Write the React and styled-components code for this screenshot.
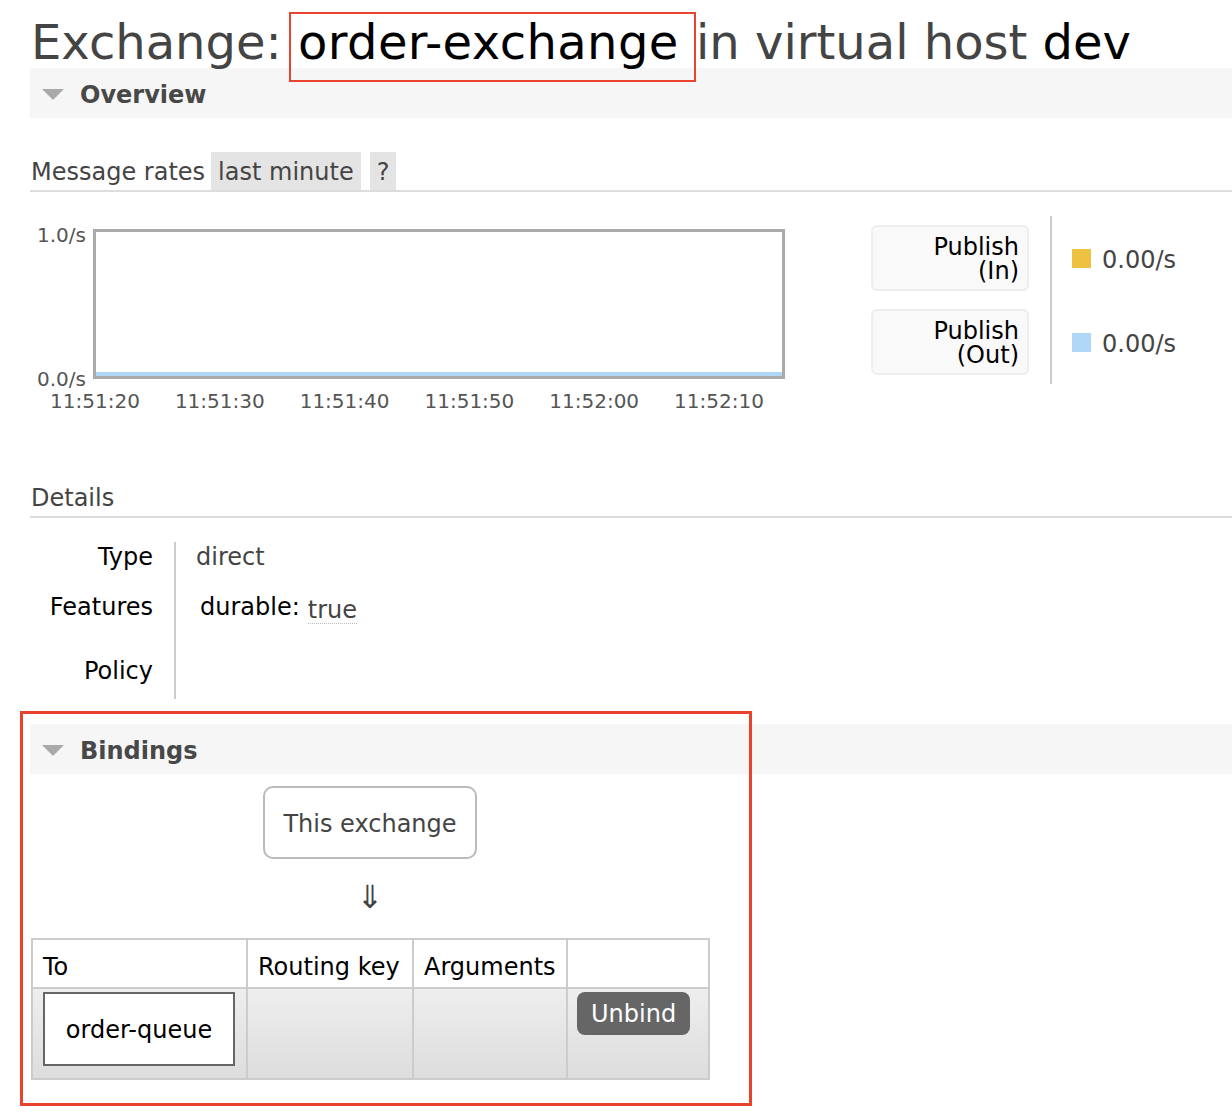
import React from 'react';
import styled, { createGlobalStyle } from 'styled-components';

// Page-wide reset: Verdana-like font, no body margin
const GlobalStyle = createGlobalStyle`
  body {
    margin: 0;
    background: #fff;
    font-family: "DejaVu Sans", Verdana, sans-serif;
    font-size: 24px;
    color: #444;
  }
`;

const Page = styled.div`
  padding: 0 0 30px 30px;
`;

const Title = styled.h1`
  margin: 16px 0 0 1px;
  font-size: 48px;
  line-height: 52px;
  font-weight: normal;
  color: #444;
  white-space: nowrap;
`;

const Strong = styled.span`
  color: #000;
`;

// annotation frame drawn over the exchange name
const Marked = styled.span`
  position: relative;
  color: #000;
  letter-spacing: 0.4px;
  margin-left: 1px;

  &::after {
    content: '';
    position: absolute;
    left: -9px;
    right: -17px;
    top: -2px;
    bottom: -12px;
    border: 2px solid #e8432e;
    pointer-events: none;
  }
`;

const Rest = styled.span`
  margin-left: 2px;
`;

const SectionBar = styled.div`
  display: flex;
  align-items: center;
  gap: 16px;
  height: 50px;
  padding: 3px 0 0 12px;
  box-sizing: border-box;
  background: #f6f6f6;
  font-weight: bold;
  color: #484848;
  margin-top: ${(p) => p.$top || 0}px;
`;

const Arrow = () => (
  <svg width="22" height="11" viewBox="0 0 22 11">
    <polygon points="0,0 22,0 11,11" fill="#aaa" />
  </svg>
);

const Heading = styled.div`
  display: flex;
  align-items: stretch;
  height: 36px;
  padding-top: 2px;
  line-height: 36px;
  border-bottom: 2px solid #ddd;
  margin-top: ${(p) => p.$top || 0}px;
`;

const HeadingText = styled.span`
  padding: 0 6px 0 1px;
`;

const HeadingTag = styled.span`
  padding: 2px 7px 0;
  margin: -2px 9px 0 0;
  background: #e4e4e4;
`;

const RatesRow = styled.div`
  display: flex;
  align-items: flex-start;
  margin-top: 24px;
`;

const Chart = styled.div`
  display: grid;
  grid-template-columns: 63px 692px;
  grid-template-rows: 150px auto;
  margin-top: 13px;
  font-size: 20px;
  line-height: 24px;
  color: #555;
`;

const YAxis = styled.div`
  display: flex;
  flex-direction: column;
  justify-content: space-between;
  align-items: flex-end;
  padding-right: 7px;
  margin: -6px 0 -12px;
`;

const Plot = styled.div`
  display: flex;
  flex-direction: column;
  justify-content: flex-end;
  border: 3px solid #aaa;
  background: #fff;
`;

const Series = styled.div`
  height: 4px;
  background: #afd8f8;
`;

const XAxis = styled.div`
  grid-column: 1 / 3;
  display: flex;
  padding-left: 2.6px;
  margin-top: 10px;
`;

const Tick = styled.span`
  width: 124.8px;
  text-align: center;
  flex: none;
`;

const Legend = styled.div`
  display: grid;
  grid-template-columns: auto auto;
  margin-left: 86px;
`;

const LegendLabelCell = styled.div`
  padding: 9px 21px 9px 0;
  border-right: 2px solid #ccc;
`;

const LegendLabel = styled.div`
  box-sizing: border-box;
  width: 158px;
  height: 66px;
  padding: 8px 8px 0 0;
  border: 2px solid #eee;
  border-radius: 6px;
  background: #f9f9f9;
  text-align: right;
  line-height: 24px;
  color: #000;
`;

const LegendValue = styled.div`
  display: flex;
  align-items: center;
  gap: 11px;
  padding: 3px 0 0 20px;
`;

const Swatch = styled.span`
  width: 19px;
  height: 19px;
  margin-top: -2px;
  background: ${(p) => p.$color};
`;

const DetailsGrid = styled.div`
  display: grid;
  grid-template-columns: 144px 1fr;
  margin-top: 24px;
  line-height: 24px;
`;

const DetailLabel = styled.div`
  height: ${(p) => p.$h}px;
  padding-top: ${(p) => p.$pad || 0}px;
  padding-right: 21px;
  box-sizing: border-box;
  text-align: right;
  color: #000;
`;

const DetailValue = styled.div`
  height: ${(p) => p.$h}px;
  padding-top: ${(p) => p.$pad || 0}px;
  padding-left: ${(p) => p.$left || 20}px;
  box-sizing: border-box;
  border-left: 2px solid #ccc;
  color: ${(p) => (p.$dark ? '#000' : '#444')};
`;

const Abbr = styled.span`
  display: inline-block;
  margin-left: 8px;
  line-height: 26px;
  vertical-align: -3px;
  color: #444;
  border-bottom: 1px dotted #bbb;
`;

const BindingsSection = styled.div`
  position: relative;
  margin-top: 25px;

  &::before {
    content: '';
    position: absolute;
    left: -10px;
    top: -13px;
    width: 726px;
    height: 389px;
    border: 3px solid #e8432e;
    pointer-events: none;
    z-index: 1;
  }
`;

const BindingsBody = styled.div`
  width: 678px;
  display: flex;
  flex-direction: column;
  align-items: center;
  margin-left: 1px;
`;

const ExchangeBox = styled.div`
  box-sizing: border-box;
  width: 214px;
  height: 73px;
  margin-top: 12px;
  padding-top: 2px;
  display: flex;
  align-items: center;
  justify-content: center;
  border: 2px solid #bbb;
  border-radius: 10px;
  color: #444;
`;

const DownArrow = styled.div`
  margin-top: 18px;
  font-size: 32px;
  line-height: 40px;
  color: #444;
`;

const Table = styled.table`
  align-self: stretch;
  margin-top: 21px;
  border-collapse: collapse;
  table-layout: fixed;
  width: 678px;
  border: 2px solid #ccc;
`;

const Th = styled.th`
  width: ${(p) => p.$w - 22}px;
  height: 40px;
  padding: 7px 10px 0;
  border: 2px solid #ccc;
  text-align: left;
  font-weight: normal;
  color: #000;
  background: #fff;
`;

const Td = styled.td`
  height: 86px;
  padding: 3px 8px 0;
  vertical-align: top;
  border: 2px solid #ccc;
  background: linear-gradient(#eee, #ddd);
`;

const QueueLink = styled.div`
  box-sizing: border-box;
  width: 192px;
  height: 74px;
  display: flex;
  align-items: center;
  justify-content: center;
  margin-left: 2px;
  padding-top: 2px;
  border: 2px solid #666;
  background: #fff;
  color: #000;
`;

const Button = styled.button`
  margin-left: 1px;
  height: 43px;
  padding: 0 14px;
  border: none;
  border-radius: 8px;
  background: #666;
  color: #fff;
  font-family: inherit;
  font-size: 24px;
`;

const ticks = ['11:51:20', '11:51:30', '11:51:40', '11:51:50', '11:52:00', '11:52:10'];

export default function App() {
  return (
    <Page>
      <GlobalStyle />
      <Title>
        Exchange: <Marked>order-exchange</Marked>{' '}
        <Rest>in virtual host <Strong>dev</Strong></Rest>
      </Title>

      <SectionBar>
        <Arrow />
        Overview
      </SectionBar>

      <Heading $top={34}>
        <HeadingText>Message rates</HeadingText>
        <HeadingTag>last minute</HeadingTag>
        <HeadingTag>?</HeadingTag>
      </Heading>

      <RatesRow>
        <Chart>
          <YAxis>
            <span>1.0/s</span>
            <span>0.0/s</span>
          </YAxis>
          <Plot>
            <Series />
          </Plot>
          <XAxis>
            {ticks.map((t) => (
              <Tick key={t}>{t}</Tick>
            ))}
          </XAxis>
        </Chart>

        <Legend>
          <LegendLabelCell>
            <LegendLabel>Publish<br />(In)</LegendLabel>
          </LegendLabelCell>
          <LegendValue>
            <Swatch $color="#edc240" />
            0.00/s
          </LegendValue>
          <LegendLabelCell>
            <LegendLabel>Publish<br />(Out)</LegendLabel>
          </LegendLabelCell>
          <LegendValue>
            <Swatch $color="#afd8f8" />
            0.00/s
          </LegendValue>
        </Legend>
      </RatesRow>

      <Heading $top={65}>
        <HeadingText>Details</HeadingText>
      </Heading>

      <DetailsGrid>
        <DetailLabel $h={49} $pad={3}>Type</DetailLabel>
        <DetailValue $h={49} $pad={3}>direct</DetailValue>
        <DetailLabel $h={50} $pad={4}>Features</DetailLabel>
        <DetailValue $h={50} $pad={4} $left={24} $dark>
          durable:<Abbr>true</Abbr>
        </DetailValue>
        <DetailLabel $h={58} $pad={18}>Policy</DetailLabel>
        <DetailValue $h={58} $pad={18} />
      </DetailsGrid>

      <BindingsSection>
        <SectionBar>
          <Arrow />
          Bindings
        </SectionBar>
        <BindingsBody>
          <ExchangeBox>This exchange</ExchangeBox>
          <DownArrow>⇓</DownArrow>
          <Table>
            <thead>
              <tr>
                <Th $w={215}>To</Th>
                <Th $w={166}>Routing key</Th>
                <Th $w={154}>Arguments</Th>
                <Th $w={142}></Th>
              </tr>
            </thead>
            <tbody>
              <tr>
                <Td>
                  <QueueLink>order-queue</QueueLink>
                </Td>
                <Td />
                <Td />
                <Td>
                  <Button>Unbind</Button>
                </Td>
              </tr>
            </tbody>
          </Table>
        </BindingsBody>
      </BindingsSection>
    </Page>
  );
}
